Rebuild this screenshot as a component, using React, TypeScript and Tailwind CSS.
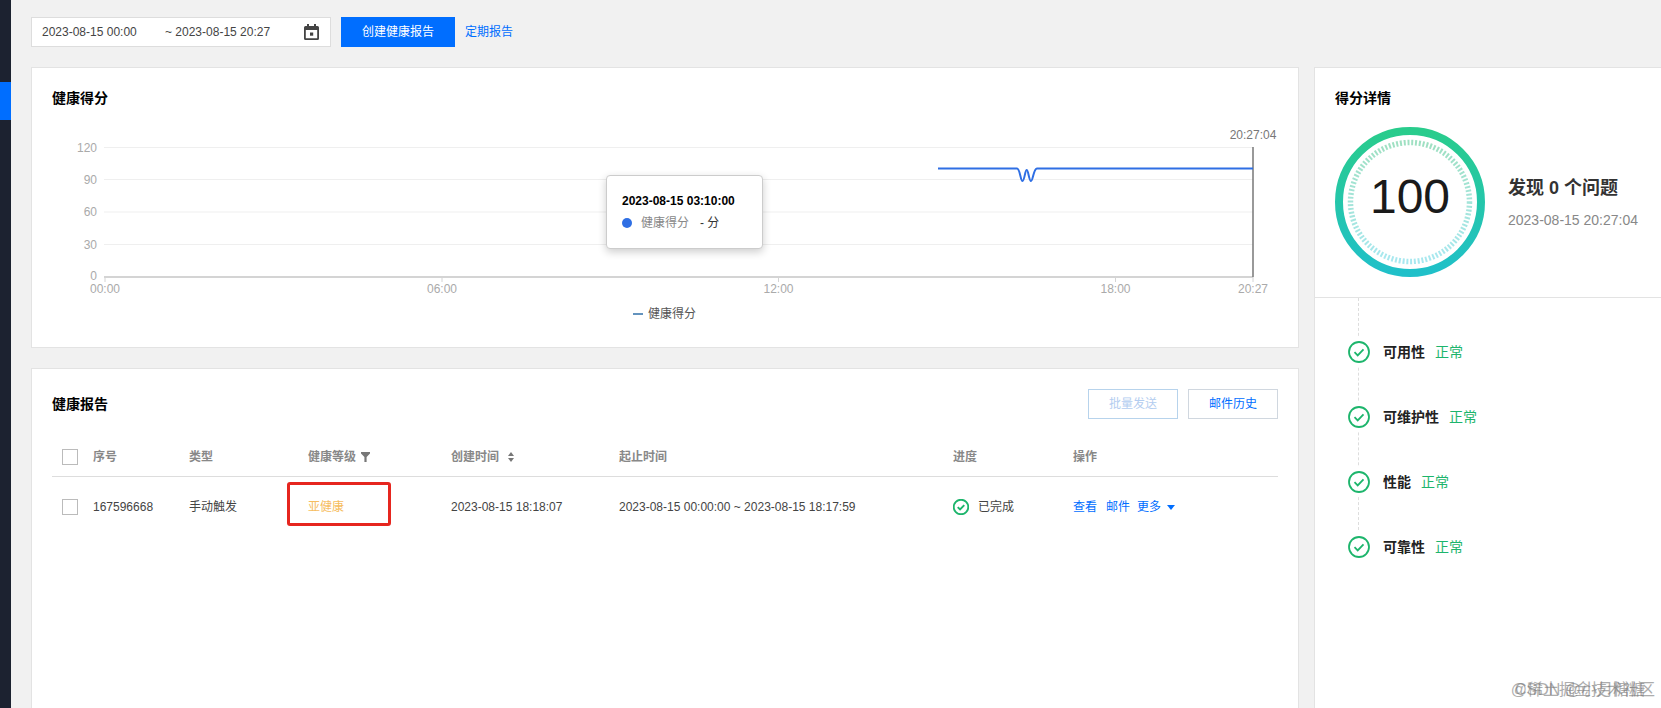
const FONT = { fontFamily: '"Liberation Sans", "Noto Sans CJK SC", sans-serif' };

const yTicks = [
  { label: "120", y: 147.5 },
  { label: "90", y: 179.5 },
  { label: "60", y: 212 },
  { label: "30", y: 244.5 },
];

const xTicks = [
  { label: "00:00", x: 105 },
  { label: "06:00", x: 442 },
  { label: "12:00", x: 778.5 },
  { label: "18:00", x: 1115.5 },
  { label: "20:27", x: 1253 },
];

const checks = ["可用性", "可维护性", "性能", "可靠性"];

function CheckCircle({ size, stroke }: { size: number; stroke: number }) {
  return (
    <svg width={size} height={size} viewBox="0 0 22 22" fill="none" className="shrink-0">
      <circle cx="11" cy="11" r="10" stroke="#1db56c" strokeWidth={stroke} />
      <path d="M6.5 11.2l3.2 3.2 5.8-6" stroke="#1db56c" strokeWidth={stroke} />
    </svg>
  );
}

function Checkbox() {
  return <div className="w-4 h-4 bg-white border border-[#bbbbbb]"></div>;
}

function ScoreChart() {
  return (
    <svg viewBox="32 120 1266 210" className="block w-[1266px] h-[210px] mt-[12px]">
      {yTicks.map((t) => (
        <g key={t.label}>
          <line x1="104" x2="1253" y1={t.y} y2={t.y} stroke="#efefef" strokeWidth="1" />
          <text x="97" y={t.y + 4} textAnchor="end" fontSize="12" fill="#aaaaaa">{t.label}</text>
        </g>
      ))}
      <text x="97" y="280" textAnchor="end" fontSize="12" fill="#aaaaaa">0</text>
      <line x1="104" x2="1253" y1="277" y2="277" stroke="#d4d4d4" strokeWidth="2" />
      {xTicks.map((t) => (
        <g key={t.label}>
          <line x1={t.x} x2={t.x} y1="277" y2="282" stroke="#d4d4d4" strokeWidth="1" />
          <text x={t.x} y="293" textAnchor="middle" fontSize="12" fill="#aaaaaa">{t.label}</text>
        </g>
      ))}
      <line x1="1253" x2="1253" y1="147" y2="277" stroke="#777777" strokeWidth="1.5" />
      <text x="1253" y="139" textAnchor="middle" fontSize="12" fill="#777777">20:27:04</text>
      <path
        d="M938 168.5H1017C1020 168.5 1020.5 181 1022.5 181C1024.5 181 1025 170 1026.7 170C1028.4 170 1029 181 1031 181C1033 181 1033.5 168.5 1037 168.5H1253"
        fill="none"
        stroke="#2f6fe4"
        strokeWidth="2"
      />
      <line x1="633" x2="643" y1="314" y2="314" stroke="#2f6fa8" strokeWidth="1.5" />
      <text x="648" y="318" fontSize="12" fill="#555555">健康得分</text>
    </svg>
  );
}

function ScoreRing() {
  return (
    <svg width="150" height="150" viewBox="0 0 150 150" className="shrink-0">
      <defs>
        <linearGradient id="ring" x1="0" y1="0" x2="0" y2="1">
          <stop offset="0" stopColor="#29cc8c" />
          <stop offset="1" stopColor="#20c0c9" />
        </linearGradient>
        <linearGradient id="dash" x1="0" y1="0" x2="0" y2="1">
          <stop offset="0" stopColor="#9fe0c2" />
          <stop offset="1" stopColor="#a8e8f0" />
        </linearGradient>
      </defs>
      <circle cx="75" cy="75" r="71" fill="none" stroke="url(#ring)" strokeWidth="8" />
      <circle cx="75" cy="75" r="59.5" fill="none" stroke="url(#dash)" strokeWidth="5.5" strokeDasharray="2 1.8" />
      <text x="75" y="86" textAnchor="middle" fontSize="48" fill="#1a1a1a">100</text>
    </svg>
  );
}

export default function App() {
  return (
    <div style={FONT} className="relative flex h-[708px] overflow-hidden bg-[#f1f1f1] text-xs text-[#444444]">
      {/* Sidebar */}
      <div className="w-[11px] shrink-0 bg-[#1c2230] pt-[82px]">
        <div className="h-[38px] bg-[#006eff]"></div>
      </div>

      <div className="flex-1 min-w-0 pl-[20px] pt-[17px]">
        {/* Toolbar */}
        <div className="flex items-center h-[30px]">
          <div className="flex items-center w-[300px] h-[30px] pl-[10px] bg-white border border-[#dddddd]">
            <span className="w-[123px]">2023-08-15 00:00</span>
            <span>~ 2023-08-15 20:27</span>
            <svg width="15" height="16" viewBox="0 0 15 16" fill="#444444" className="ml-auto mr-[11px]">
              <path d="M3 0h2v2h5V0h2v2h1.5A1.5 1.5 0 0 1 15 3.5v11a1.5 1.5 0 0 1-1.5 1.5h-12A1.5 1.5 0 0 1 0 14.5v-11A1.5 1.5 0 0 1 1.5 2H3zM1.8 6v8.2h11.4V6z" />
              <rect x="6" y="8.5" width="3.2" height="3.2" />
            </svg>
          </div>
          <button className="w-[114px] h-[30px] ml-[10px] bg-[#006eff] text-white">创建健康报告</button>
          <a className="ml-[10px] text-[#006eff]">定期报告</a>
        </div>

        <div className="flex gap-[15px] mt-[20px]">
          {/* Left column */}
          <div className="w-[1268px] shrink-0">
            <div className="relative h-[281px] bg-white border border-[#e3e3e3]">
              <h2 className="pl-[20px] pt-[20px] text-sm leading-5 font-bold text-black">健康得分</h2>
              <ScoreChart />
              {/* Tooltip */}
              <div className="absolute left-[574px] top-[107px] w-[157px] h-[74px] pl-[15px] pt-[17px] bg-white border border-[#cccccc] rounded shadow-[0_3px_8px_rgba(0,0,0,0.2)]">
                <div className="font-bold leading-4 text-black">2023-08-15 03:10:00</div>
                <div className="flex items-center mt-[6px] leading-4">
                  <span className="w-[10px] h-[10px] rounded-full bg-[#2f6fe4]"></span>
                  <span className="ml-[9px] text-[#888888]">健康得分</span>
                  <span className="ml-[11px] text-[#333333]">- 分</span>
                </div>
              </div>
            </div>

            <div className="h-[400px] mt-[20px] px-[20px] pt-[20px] bg-white border border-[#e3e3e3]">
              <div className="flex items-center justify-between h-[30px]">
                <h2 className="text-sm font-bold text-black">健康报告</h2>
                <div className="flex gap-[10px]">
                  <button className="w-[90px] h-[30px] bg-white border border-[#b7d3ec] text-[#b3cdf0]">批量发送</button>
                  <button className="w-[90px] h-[30px] bg-white border border-[#d0d7df] text-[#006eff]">邮件历史</button>
                </div>
              </div>

              {/* Table */}
              <div className="mt-[18px]">
                <div className="grid grid-cols-[41px_96px_119px_143px_168px_334px_120px_1fr] items-center h-10 border-b border-[#dddddd] font-bold text-[#888888]">
                  <div className="pl-[10px]"><Checkbox /></div>
                  <div>序号</div>
                  <div>类型</div>
                  <div className="flex items-center gap-[5px]">
                    健康等级
                    <svg width="9" height="10" viewBox="0 0 9 10" fill="#777777">
                      <path d="M0 0h9v1.5L5.6 5v5H3.4V5L0 1.5z" />
                    </svg>
                  </div>
                  <div className="flex items-center gap-[9px]">
                    创建时间
                    <svg width="6" height="10" viewBox="0 0 6 10" fill="#777777">
                      <path d="M3 0l3 4H0zM3 10L0 6h6z" />
                    </svg>
                  </div>
                  <div>起止时间</div>
                  <div>进度</div>
                  <div>操作</div>
                </div>
                <div className="grid grid-cols-[41px_96px_119px_143px_168px_334px_120px_1fr] items-center h-[60px]">
                  <div className="pl-[10px]"><Checkbox /></div>
                  <div>167596668</div>
                  <div>手动触发</div>
                  <div className="relative text-[#f6bd5f]">
                    亚健康
                    <div className="absolute left-[-21px] top-[-17px] w-[104px] h-[44px] border-[3px] border-[#e6261f] rounded-[3px]"></div>
                  </div>
                  <div>2023-08-15 18:18:07</div>
                  <div>2023-08-15 00:00:00 ~ 2023-08-15 18:17:59</div>
                  <div className="flex items-center gap-[9px]">
                    <CheckCircle size={16} stroke={2.6} />
                    已完成
                  </div>
                  <div className="flex items-center text-[#006eff]">
                    <a>查看</a>
                    <a className="ml-[9px]">邮件</a>
                    <a className="ml-[7px]">更多</a>
                    <svg width="8" height="5" viewBox="0 0 8 5" fill="#006eff" className="ml-[6px]">
                      <path d="M0 0h8L4 5z" />
                    </svg>
                  </div>
                </div>
              </div>
            </div>
          </div>

          {/* Right column */}
          <div className="flex-1 min-w-0 h-[700px] bg-white border border-[#e3e3e3] border-r-0">
            <div className="h-[230px] pl-[20px] pt-[20px] border-b border-[#e3e3e3]">
              <h2 className="text-sm leading-5 font-bold text-black">得分详情</h2>
              <div className="flex items-center mt-[19px]">
                <ScoreRing />
                <div className="ml-[23px] mt-[1px]">
                  <div className="text-lg leading-6 font-bold text-[#333333]">发现 0 个问题</div>
                  <div className="mt-[10px] text-sm leading-5 text-[#888888]">2023-08-15 20:27:04</div>
                </div>
              </div>
            </div>
            <div className="relative pl-[33px] pt-[21px]">
              <div className="absolute left-[43px] top-0 h-[232px] border-l border-dashed border-[#dddddd]"></div>
              {checks.map((name) => (
                <div key={name} className="relative flex items-center h-[65px] text-sm">
                  <span className="bg-white py-1 rounded-full">
                    <CheckCircle size={22} stroke={1.8} />
                  </span>
                  <span className="ml-[13px] font-bold text-[#222222]">{name}</span>
                  <span className="ml-[10px] text-[#1db56c]">正常</span>
                </div>
              ))}
            </div>
          </div>
        </div>
      </div>

      {/* Watermark */}
      <div className="absolute right-[6px] bottom-[8px] text-base leading-5 text-[#777777] opacity-60">@稀土掘金技术社区</div>
      <div className="absolute right-[16px] bottom-[8px] text-base leading-5 text-[#777777] opacity-60">CSDN @小月糖糖</div>
    </div>
  );
}
